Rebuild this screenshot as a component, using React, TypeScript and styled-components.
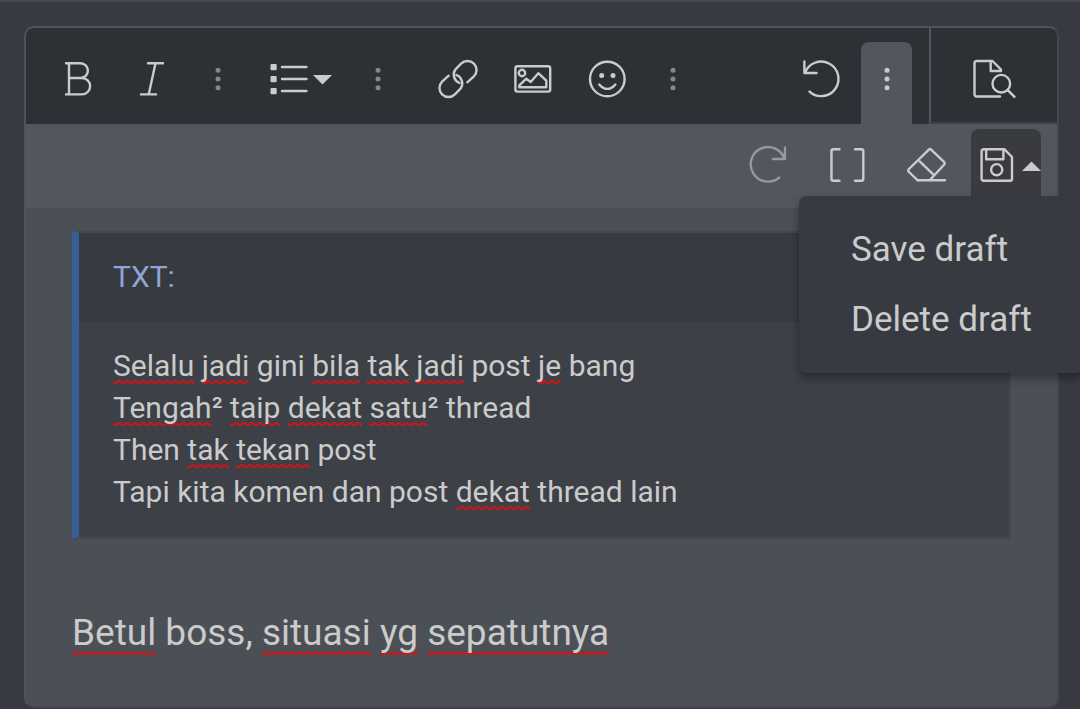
import React from 'react';
import styled, { createGlobalStyle } from 'styled-components';

const color = {
  page: '#373a41',
  toolbar: '#2d3034',
  raised: '#52565e',
  editor: '#4b4f56',
  quote: '#3d4046',
  line: '#44474f',
  text: '#cbcbcb',
  muted: '#85888b',
  accent: '#385f95',
  link: '#8ba6d2',
};

const squiggle =
  "url(\"data:image/svg+xml,%3Csvg xmlns='http://www.w3.org/2000/svg' width='8' height='6'%3E%3Cpath d='M-2 2.2C0 2.2 0 4.2 2 4.2S4 2.2 6 2.2S8 4.2 10 4.2' fill='none' stroke='%23c4181c' stroke-width='2.3'/%3E%3C/svg%3E\")";

const GlobalStyle = createGlobalStyle`
  *, *::before, *::after { box-sizing: border-box; }
  body {
    margin: 0;
    background: ${color.page};
    color: ${color.text};
    font-family: Roboto, "Liberation Sans", sans-serif;
    overflow-x: hidden;
  }
`;

const Page = styled.main`
  border-top: 2px solid #474a53;
  padding: 24px 21px 1px 24px;
  overflow: hidden;
`;

const Box = styled.section`
  border: 2px solid;
  border-color: #50545c ${color.line} ${color.line} #4f535b;
  border-radius: 10px;
  background: ${color.editor};
`;

const Toolbar = styled.div`
  display: flex;
  align-items: flex-end;
  height: 96px;
  padding-left: 14px;
  background: ${color.toolbar};
  border-radius: 8px 8px 0 0;
`;

const Group = styled.div`
  display: flex;
  margin-right: 14px;
`;

const EndGroup = styled.div`
  display: flex;
  gap: 2px;
  margin-left: auto;
  margin-right: 17px;
`;

const Tool = styled.button<{ $width?: number; $on?: boolean }>`
  display: flex;
  align-items: center;
  justify-content: center;
  gap: 5px;
  width: ${(p) => p.$width ?? 75}px;
  height: 82px;
  padding: 0 0 8px;
  border: 0;
  border-radius: 8px 8px 0 0;
  background: ${(p) => (p.$on ? color.raised : 'transparent')};
  color: ${color.text};
  cursor: pointer;
`;

const ListTool = styled(Tool)`
  width: 90px;
  padding-right: 8px;
`;

const MoreTool = styled(Tool)`
  color: ${(p) => (p.$on ? color.text : color.muted)};
`;

const PreviewTool = styled(Tool)`
  width: 128px;
  height: 96px;
  padding: 8px 0 0;
  border-left: 2px solid ${color.raised};
  border-bottom: 2px solid #3f4247;
  border-radius: 0 8px 0 0;
`;

const SubToolbar = styled.div`
  display: flex;
  justify-content: flex-end;
  height: 84px;
  padding: 5px 16px 12px 0;
  background: ${color.raised};
`;

const SubTool = styled(Tool)`
  width: 81px;
  height: 67px;
  padding: 5px 0 0;

  &:disabled {
    color: #98999b;
  }
`;

const DraftTool = styled(SubTool)`
  width: 70px;
  padding-left: 9px;
  gap: 8px;
  justify-content: flex-start;
  background: #393b3f;
`;

const DropDown = styled.div`
  position: relative;
  margin-left: 4px;
`;

const Menu = styled.div`
  position: absolute;
  z-index: 2;
  top: 100%;
  right: -42px;
  width: 284px;
  padding: 19px 0 18px;
  border-radius: 8px;
  background: ${color.page};
  box-shadow: 0 5px 10px rgba(0, 0, 0, 0.35);
`;

const MenuItem = styled.button`
  display: block;
  width: 100%;
  height: 70px;
  padding: 0 0 0 52px;
  border: 0;
  background: none;
  color: ${color.text};
  font: 35px/70px Roboto, "Liberation Sans", sans-serif;
  text-align: left;
  white-space: nowrap;
  cursor: pointer;
`;

const Editor = styled.div`
  padding: 23px 46px 46px;
  outline: 0;
`;

const Quote = styled.blockquote`
  margin: 0 0 67px;
  border: 2px solid ${color.line};
  border-left: 7px solid ${color.accent};
  background: ${color.quote};
  font-size: 30px;
  line-height: 42px;
`;

const QuoteTitle = styled.div`
  padding: 23px 34px 24px;
  background: ${color.page};
  color: ${color.link};
`;

const QuoteBody = styled.div`
  padding: 23px 34px 24px;
`;

const Paragraph = styled.p`
  margin: 0;
  font-size: 37px;
  line-height: 54px;
`;

const Misspelt = styled.span`
  padding-bottom: 2px;
  background: ${squiggle} left bottom / 8px 6px repeat-x;
`;

const Drawing = styled.svg`
  display: block;
  flex: none;
  fill: none;
  stroke: currentColor;
  stroke-width: 2.4;
  stroke-linecap: round;
  stroke-linejoin: round;
`;

const Solid = styled(Drawing)`
  fill: currentColor;
  stroke: none;
`;

function Icon({ width = 45, children }: { width?: number; children: React.ReactNode }) {
  return (
    <Drawing width={width} height={44} viewBox={`0 0 ${width} 44`} aria-hidden>
      {children}
    </Drawing>
  );
}

function Dots() {
  return (
    <Solid width={6} height={44} viewBox="0 0 6 44" aria-hidden>
      <circle cx="3" cy="13.3" r="2.5" />
      <circle cx="3" cy="22" r="2.5" />
      <circle cx="3" cy="30.7" r="2.5" />
    </Solid>
  );
}

function Caret({ up }: { up?: boolean }) {
  return (
    <Solid width={19} height={44} viewBox="0 0 19 44" aria-hidden>
      <path d={up ? 'M0 28L9.5 18.5L19 28z' : 'M0 18L9.5 27.5L19 18z'} />
    </Solid>
  );
}

function More({ $on }: { $on?: boolean }) {
  return (
    <MoreTool type="button" aria-label="More options" aria-expanded={!!$on} $width={$on ? 51 : 56} $on={$on}>
      <Dots />
    </MoreTool>
  );
}

/* Renders text in which words between asterisks carry the spelling mark. */
function Spelled({ children }: { children: string }) {
  return (
    <>
      {children.split('*').map((part, i) => (i % 2 ? <Misspelt key={i}>{part}</Misspelt> : part))}
    </>
  );
}

const quoteLines = [
  '*Selalu* *jadi* gini *bila* *tak* *jadi* post *je* bang',
  '*Tengah*² *taip* *dekat* *satu*² thread',
  'Then *tak* *tekan* post',
  'Tapi kita komen dan post *dekat* thread lain',
];

export default function App() {
  return (
    <>
      <GlobalStyle />
      <Page>
        <Box>
          <Toolbar role="toolbar" aria-label="Formatting">
            <Group>
              <Tool type="button" aria-label="Bold">
                <Icon>
                  <path d="M11 6.2H25.5a7.4 7.4 0 0 1 0 14.8H14M25.5 21h1.4a8.2 8.2 0 0 1 0 16.4H11M14 6.2v31.2" />
                </Icon>
              </Tool>
              <Tool type="button" aria-label="Italic">
                <Icon>
                  <path d="M18 6.2H33M11 37.4H26M25.5 6.2L18.7 37.4" />
                </Icon>
              </Tool>
              <More />
            </Group>
            <Group>
              <ListTool type="button" aria-label="List" $width={90}>
                <Icon width={38}>
                  <path d="M12 10H36.5M12 22H36.5M12 34H36.5" />
                  <g fill="currentColor" stroke="none">
                    <rect x="0.5" y="7" width="6.2" height="6.2" rx="1" />
                    <rect x="0.5" y="19" width="6.2" height="6.2" rx="1" />
                    <rect x="0.5" y="31" width="6.2" height="6.2" rx="1" />
                  </g>
                </Icon>
                <Caret />
              </ListTool>
              <More />
            </Group>
            <Group>
              <Tool type="button" aria-label="Insert link">
                <Icon>
                  <path d="M32.3 25.3L38.9 19.4A9 9 0 0 0 26.1 6.6L20.5 12.3A9 9 0 0 0 24.5 26" />
                  <path d="M13.7 18.7L7.1 24.6A9 9 0 0 0 19.9 37.4L25.5 31.7A9 9 0 0 0 21.5 18" />
                </Icon>
              </Tool>
              <Tool type="button" aria-label="Insert image">
                <Icon>
                  <rect x="5.4" y="9.2" width="34.8" height="25.4" rx="2" />
                  <circle cx="12" cy="16" r="3.2" />
                  <path d="M9.3 30.3V28.3L16.3 21.7L20.7 25L28.3 16.2L36.3 23.7V30.3z" />
                </Icon>
              </Tool>
              <Tool type="button" aria-label="Smilies">
                <Icon>
                  <circle cx="22.3" cy="22" r="17.3" />
                  <path d="M14.3 27.6q8 8.6 16 0" />
                  <g fill="currentColor" stroke="none">
                    <circle cx="16.7" cy="18.4" r="2.5" />
                    <circle cx="28" cy="18.4" r="2.5" />
                  </g>
                </Icon>
              </Tool>
              <More />
            </Group>
            <EndGroup>
              <Tool type="button" aria-label="Undo">
                <Icon>
                  <path d="M5.4 4.5V16H17.5M5.9 16A17.3 17.3 0 1 1 10.5 34.6" />
                </Icon>
              </Tool>
              <More $on />
            </EndGroup>
            <PreviewTool type="button" aria-label="Preview">
              <Icon width={46}>
                <path d="M29 39.5H5.5a2 2 0 0 1-2-2V6a2 2 0 0 1 2-2H21.5L30 12.5V14H19.7V4.5" />
                <circle cx="30.3" cy="26.7" r="8.8" />
                <path d="M37 33.3L43.5 39.8" />
              </Icon>
            </PreviewTool>
          </Toolbar>

          <SubToolbar role="toolbar" aria-label="More options">
            <SubTool type="button" aria-label="Redo" disabled>
              <Icon>
                <path d="M43 4.5V16H31M42.5 16A17.3 17.3 0 1 0 37.1 34.6" />
              </Icon>
            </SubTool>
            <SubTool type="button" aria-label="Toggle BB code">
              <Icon>
                <path d="M16.5 6.3H10.5a2 2 0 0 0-2 2V35.7a2 2 0 0 0 2 2H16.5M32 6.3H38.3a2 2 0 0 1 2 2V35.7a2 2 0 0 1-2 2H32" />
              </Icon>
            </SubTool>
            <SubTool type="button" aria-label="Remove formatting">
              <Icon>
                <path d="M41 37.3H13.7L5 29a2 2 0 0 1 0-3L24.6 6.8a2 2 0 0 1 2.8 0L40 18.8a2 2 0 0 1 0 3L25.7 37.3M15.7 18.3L29.7 31.8" />
              </Icon>
            </SubTool>
            <DropDown>
              <DraftTool type="button" aria-label="Drafts" aria-haspopup="menu" aria-expanded>
                <Icon width={34}>
                  <path d="M3.6 6.3H24.5L32 14V35.7a2 2 0 0 1-2 2H3.6a2 2 0 0 1-2-2V8.3a2 2 0 0 1 2-2zM6.2 6.5V16.3H23.4V6.5" />
                  <circle cx="16.7" cy="26.7" r="5.6" />
                </Icon>
                <Caret up />
              </DraftTool>
              <Menu role="menu">
                <MenuItem type="button" role="menuitem">Save draft</MenuItem>
                <MenuItem type="button" role="menuitem">Delete draft</MenuItem>
              </Menu>
            </DropDown>
          </SubToolbar>

          <Editor
            role="textbox"
            aria-multiline
            aria-label="Message"
            contentEditable
            suppressContentEditableWarning
            spellCheck={false}
          >
            <Quote>
              <QuoteTitle>TXT:</QuoteTitle>
              <QuoteBody>
                {quoteLines.map((line) => (
                  <div key={line}>
                    <Spelled>{line}</Spelled>
                  </div>
                ))}
              </QuoteBody>
            </Quote>
            <Paragraph>
              <Spelled>*Betul* boss, *situasi* *yg* *sepatutnya*</Spelled>
            </Paragraph>
          </Editor>
        </Box>
      </Page>
    </>
  );
}
